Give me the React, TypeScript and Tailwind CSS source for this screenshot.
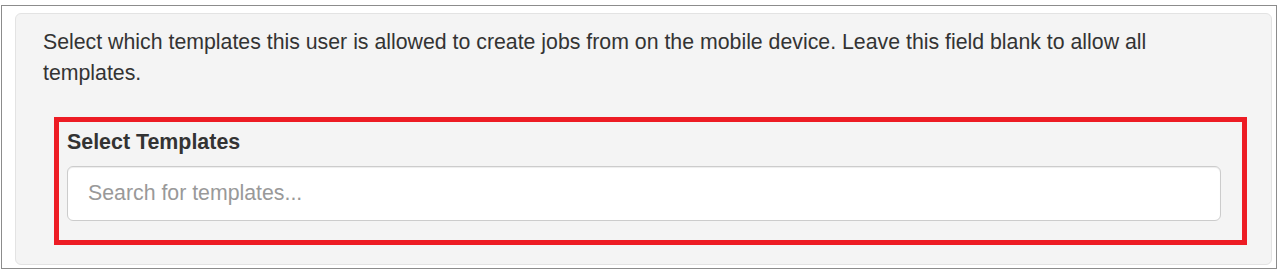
import React from "react";

export default function App() {
  return (
    <div
      className="relative w-[1282px] h-[271px] bg-white pt-[5px] pl-[1px]"
      style={{ fontFamily: '"Liberation Sans", Arial, sans-serif' }}
    >
      <div className="flex w-[1276px] h-[264px] border border-[#8c8c8c] pl-[13px] pt-[7px] pr-[4px] pb-[3px]">
        <div className="flex-1 rounded-[6px] border border-[#e3e3e3] bg-[#f4f4f4] pl-[27px] pr-[27px] pt-[13px]">
          <p className="max-w-[1170px] text-[21.3px] leading-[31px] text-[#333333]">
            Select which templates this user is allowed to create jobs from on the mobile device. Leave this field blank to allow all templates.
          </p>
          <div className="mt-[38px] pl-[24px] pr-[23px]">
            <label className="block text-[21.4px] leading-[30px] font-bold text-[#333333] mb-[9px]">
              Select Templates
            </label>
            <input
              type="text"
              placeholder="Search for templates..."
              className="block w-full h-[55px] rounded-[6px] border border-[#cccccc] bg-white px-[20px] text-[21.3px] text-[#555555] placeholder:text-[#999999] shadow-[inset_0_1px_1px_rgba(0,0,0,0.075)] outline-none"
            />
          </div>
        </div>
      </div>
      <div className="pointer-events-none absolute left-[54px] top-[117px] w-[1193px] h-[128px] border-[5px] border-[#ed1c24]" />
    </div>
  );
}
